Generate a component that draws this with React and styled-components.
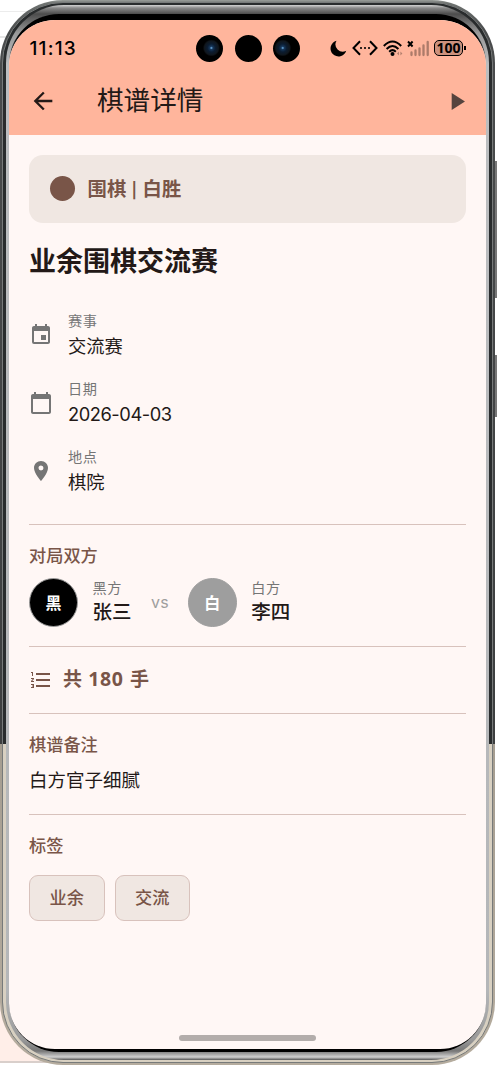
import styled, { createGlobalStyle } from "styled-components"
import { MdEvent, MdCalendarToday, MdPlace, MdArrowBack, MdPlayArrow, MdFormatListNumbered } from "react-icons/md"

const infos = [
    { icon: MdEvent, label: "赛事", value: "交流赛" },
    { icon: MdCalendarToday, label: "日期", value: "2026-04-03", latin: true },
    { icon: MdPlace, label: "地点", value: "棋院" },
]

const tags = ["业余", "交流"]

export default function App() {
    return (
        <Desktop>
            <GlobalStyle />
            <Shell>
                <Rim>
                    <Metal>
                        <Bezel>
                            <Screen>
                                <StatusBar />
                                <AppBar>
                                    <MdArrowBack size={28} />
                                    <h1>棋谱详情</h1>
                                    <MdPlayArrow size={29} color="#55433e" />
                                </AppBar>
                                <Content>
                                    <ResultCard>
                                        <Dot />
                                        <p>围棋 <span>|</span> 白胜</p>
                                    </ResultCard>
                                    <Title>业余围棋交流赛</Title>
                                    <InfoList>
                                        {infos.map((info) => <Info key={info.label} {...info} />)}
                                    </InfoList>
                                    <Divider />
                                    <SectionTitle>对局双方</SectionTitle>
                                    <Players>
                                        <Avatar $color="#000000">黑</Avatar>
                                        <Player>
                                            <Label>黑方</Label>
                                            <PlayerName>张三</PlayerName>
                                        </Player>
                                        <Versus>vs</Versus>
                                        <Avatar $color="#9e9e9e">白</Avatar>
                                        <Player>
                                            <Label>白方</Label>
                                            <PlayerName>李四</PlayerName>
                                        </Player>
                                    </Players>
                                    <Divider />
                                    <Moves>
                                        <MdFormatListNumbered size={24} />
                                        <p>共 <span>180</span> 手</p>
                                    </Moves>
                                    <Divider />
                                    <SectionTitle>棋谱备注</SectionTitle>
                                    <Note>白方官子细腻</Note>
                                    <Divider />
                                    <SectionTitle>标签</SectionTitle>
                                    <Tags>
                                        {tags.map((tag) => <Tag key={tag}>{tag}</Tag>)}
                                    </Tags>
                                </Content>
                                <HomeBar />
                            </Screen>
                        </Bezel>
                    </Metal>
                </Rim>
            </Shell>
            <SideKeys />
        </Desktop>
    )
}

function Info({ icon: Icon, label, value, latin }) {
    return (
        <InfoRow>
            <Icon size={24} />
            <div>
                <Label>{label}</Label>
                <Value $latin={latin}>{value}</Value>
            </div>
        </InfoRow>
    )
}

function StatusBar() {
    return (
        <Status>
            <Time>11:13</Time>
            <Cameras>
                <Lens $x="57%" />
                <Lens $plain />
                <Lens $x="36%" />
            </Cameras>
            <StatusIcons>
                <svg width="17" height="17" viewBox="0 0 17 17">
                    <path d="M6.5 .7A8 8 0 1 0 16.2 10.8A7.3 7.3 0 0 1 6.5 .7Z" />
                </svg>
                <svg width="26" height="16" viewBox="0 0 26 16">
                    <path d="M8 1.2 1.5 8 8 14.8M18 1.2 24.5 8 18 14.8" fill="none" stroke="#000" strokeWidth="2" />
                    <circle cx="9" cy="8" r="1.1" />
                    <circle cx="13" cy="8" r="1.1" />
                    <circle cx="17" cy="8" r="1.1" />
                </svg>
                <svg width="20" height="17" viewBox="0 0 20 17">
                    <g fill="none" stroke="#000" strokeWidth="2">
                        <path d="M.8 6Q9.5-2.8 18.2 6" />
                        <path d="M3.6 9Q9.5 3 15.4 9" />
                        <path d="M6.2 11.8Q9.5 8.5 12.8 11.8" />
                    </g>
                    <circle cx="9.5" cy="14" r="2" />
                    <path d="m16 11.6-2 2 2 2zM17.4 11.6l2 2-2 2z" opacity=".3" />
                </svg>
                <svg width="22" height="17" viewBox="0 0 22 17">
                    <path d="m1 1.5 4.6 5M5.6 1.5 1 6.5" stroke="#000" strokeWidth="1.9" />
                    <path d="M4.5 12.5v2.5M8.5 10.5V15M12.5 8.3V15M16.5 5.5V15M20.7 2v13" stroke="#000" strokeWidth="2.3" strokeLinecap="round" opacity=".32" />
                </svg>
                <Battery>100</Battery>
            </StatusIcons>
        </Status>
    )
}

const GlobalStyle = createGlobalStyle`
    *{
        box-sizing: border-box;
    }
    body{
        margin: 0;
        background: #FFFFFF;
        font-family: Inter, 'Noto Sans CJK SC', sans-serif;
    }
    h1, h2, h3, p{
        margin: 0;
    }
    svg{
        display: block;
        flex-shrink: 0;
    }
`

const Desktop = styled.div`
    width: 497px;
    height: 1065px;
    overflow: hidden;
    display: flex;
    background:
        linear-gradient(#ececec, #ececec) 0 11px / 60px 1px no-repeat,
        linear-gradient(#e6e6e6, #e6e6e6) 0 36px / 20px 2px no-repeat,
        linear-gradient(#d9cfcb, #d9cfcb) 0 1061px / 130px 2px no-repeat,
        linear-gradient(#ffeee8, #ffeee8) 0 744px / 60px 317px no-repeat,
        #FFFFFF;
`

const SideKeys = styled.div`
    width: 1.5px;
    background:
        linear-gradient(#777777, #777777) 0 161px / 2px 137px no-repeat,
        linear-gradient(#777777, #777777) 0 355px / 2px 62px no-repeat;
`

const Shell = styled.div`
    width: 495px;
    height: 1065px;
    padding: 2px;
    border-radius: 63px;
    background: linear-gradient(#9a9e9a 0, #707472 3px, #4a4c4d 30px, #3c3e3f 744px, #a59d90 744px, #b5ac9e 100%);
`

const Rim = styled.div`
    height: 100%;
    padding: 2px 3px;
    border: 1px solid #777a7a;
    border-radius: 61px;
    background: linear-gradient(#292c2d 0, #292c2d 741px, #d8d0c1 741px, #d8d0c1 100%);
`

const Metal = styled.div`
    height: 100%;
    padding: 9px 3px 8px;
    border-radius: 58px;
    background: linear-gradient(#d4d4d4 0, #8a8a8a 3px, #4c4c4c 9px, #999999 28px, #bcbec0 60px, #b4b6b8 985px, #999999 1035px, #777777 1046px, #d0d0d0 1052px, #555555 100%);
`

const Bezel = styled.div`
    height: 100%;
    padding: 6px 0 3px;
    border-radius: 50px;
    background: linear-gradient(#000000 0, #000000 22px, #999999 50px, #aeb0b3 980px, #000000 1015px, #000000 100%);
`

const Screen = styled.div`
    height: 100%;
    display: flex;
    flex-direction: column;
    overflow: hidden;
    border-radius: 46px;
    background-color: #fff7f5;
    color: #231917;
`

const Status = styled.div`
    height: 56.7px;
    flex-shrink: 0;
    padding: 0 20px 0 20.5px;
    display: grid;
    grid-template-columns: 166.5px 104px 1fr;
    align-items: center;
    background-color: #ffb59c;
`

const Time = styled.p`
    padding-top: 1px;
    font-size: 19px;
    font-weight: 500;
    line-height: 24px;
    letter-spacing: 1.2px;
    color: #000000;
`

const Cameras = styled.div`
    display: flex;
    justify-content: space-between;
`

const Lens = styled.div`
    width: 27px;
    height: 27px;
    border-radius: 50%;
    background: ${({ $plain, $x }) => $plain
        ? "#000000"
        : `radial-gradient(circle at ${$x} 48%, #75b8ef 0, #17375a 1.6px, #0b1c31 4px, #10161c 7px, #000000 8.5px)`};
`

const StatusIcons = styled.div`
    display: flex;
    align-items: center;
    justify-content: flex-end;
    gap: 4.7px;
`

const Battery = styled.div`
    width: 29px;
    height: 16px;
    margin-right: 3px;
    position: relative;
    border: 1.5px solid #000000;
    border-radius: 5px;
    background-color: #cc917d;
    font-family: 'Noto Sans', sans-serif;
    font-size: 14px;
    font-weight: 700;
    line-height: 14px;
    text-align: center;
    color: #000000;
    &::after{
        content: "";
        position: absolute;
        right: -4px;
        top: 4.5px;
        width: 2px;
        height: 4px;
        background-color: #000000;
    }
`

const AppBar = styled.header`
    height: 58.6px;
    flex-shrink: 0;
    padding: 0 15px 9px 20px;
    display: flex;
    align-items: center;
    background-color: #ffb59c;
    h1{
        flex: 1;
        margin: -2px 0 0 40px;
        font-size: 26.6px;
        font-weight: 400;
        line-height: 36px;
    }
`

const Content = styled.main`
    flex: 1;
    padding: 19.7px 20px 0;
`

const ResultCard = styled.div`
    height: 68px;
    padding: 0 21px;
    display: flex;
    align-items: center;
    gap: 12.5px;
    border-radius: 14px;
    background-color: #f0e7e2;
    p{
        margin-top: -1px;
        font-family: 'Noto Sans CJK SC', sans-serif;
        font-size: 19.3px;
        font-weight: 700;
        line-height: 28px;
        letter-spacing: 0.2px;
        color: #795548;
    }
    span{
        margin: 0 0.8px;
        font-size: 16px;
        font-weight: 900;
        vertical-align: 1px;
        line-height: 1;
    }
`

const Dot = styled.div`
    width: 25px;
    height: 25px;
    border-radius: 50%;
    background-color: #795548;
`

const Title = styled.h2`
    margin-top: 21px;
    font-size: 27px;
    font-weight: 700;
    line-height: 36px;
`

const InfoList = styled.div`
    margin: 31px 0 28.6px;
    display: flex;
    flex-direction: column;
    gap: 20.2px;
`

const InfoRow = styled.div`
    height: 48px;
    display: flex;
    align-items: center;
    gap: 15px;
    color: #757575;
`

const Label = styled.p`
    font-size: 14.2px;
    line-height: 20px;
    letter-spacing: 0.5px;
    color: #757575;
`

const Value = styled.p`
    margin-top: 2px;
    font-size: 18.3px;
    line-height: 26px;
    letter-spacing: ${({ $latin }) => $latin ? "-0.45px" : "0"};
    color: #231917;
`

const Divider = styled.hr`
    height: 1px;
    margin: 0;
    border: 0;
    background-color: #d8c2bc;
`

const SectionTitle = styled.h3`
    margin-top: 19px;
    font-size: 17.2px;
    font-weight: 500;
    line-height: 24px;
    color: #795548;
`

const Players = styled.div`
    margin: 10px 0 19px;
    display: flex;
    align-items: center;
`

const Avatar = styled.div`
    width: 49px;
    height: 49px;
    display: flex;
    align-items: center;
    justify-content: center;
    border: 1px solid #9e9e9e;
    border-radius: 50%;
    background-color: ${({ $color }) => $color};
    font-size: 16px;
    font-weight: 700;
    color: #FFFFFF;
`

const Player = styled.div`
    margin-left: 14.5px;
`

const PlayerName = styled.p`
    font-size: 19.5px;
    font-weight: 500;
    line-height: 28px;
`

const Versus = styled.p`
    margin: 0 19px 0 19.5px;
    font-size: 16px;
    letter-spacing: 0.2px;
    color: #9e9e9e;
`

const Moves = styled.div`
    height: 66px;
    display: flex;
    align-items: center;
    gap: 10px;
    color: #795548;
    p{
        font-size: 19px;
        font-weight: 700;
        line-height: 28px;
        word-spacing: 1.8px;
    }
    span{
        font-family: 'Noto Sans', sans-serif;
        font-size: 19.5px;
        letter-spacing: 0.6px;
    }
`

const Note = styled.p`
    margin: 10px 0 21px;
    font-size: 18.5px;
    line-height: 26px;
`

const Tags = styled.div`
    margin-top: 17px;
    display: flex;
    gap: 10px;
`

const Tag = styled.div`
    width: 75.5px;
    height: 46px;
    padding-bottom: 2px;
    display: flex;
    align-items: center;
    justify-content: center;
    border: 1.2px solid #d8c2bc;
    border-radius: 9px;
    background-color: #f0e7e2;
    font-size: 17.2px;
    font-weight: 500;
    color: #795548;
`

const HomeBar = styled.div`
    width: 137px;
    height: 6px;
    flex-shrink: 0;
    margin: 0 auto 8px;
    border-radius: 3px;
    background-color: #b3adab;
`
